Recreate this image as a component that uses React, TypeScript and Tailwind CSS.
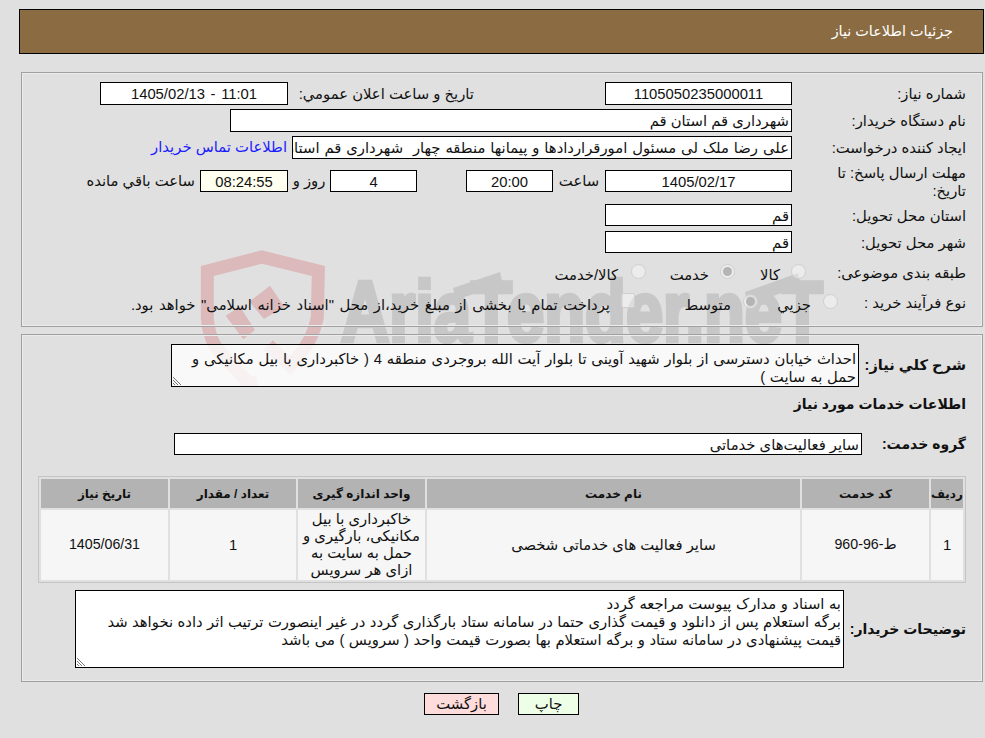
import type { ReactNode } from 'react';

function Box({ w, children, center, bg = 'bg-white', h = 'h-[23px]', extra = '' }: { w: string; children?: ReactNode; center?: boolean; bg?: string; h?: string; extra?: string }) {
  return (
    <div className={`${w} ${h} ${bg} ${extra} shrink-0 overflow-hidden whitespace-nowrap border border-black px-[2px] leading-[22px] ${center ? 'text-center' : 'text-right'}`}>
      {children}
    </div>
  );
}

function Radio({ checked }: { checked?: boolean }) {
  return (
    <span className="relative top-[-1px] inline-flex h-[15px] w-[15px] shrink-0 items-center justify-center rounded-full border border-[#cfcfcf] bg-white/40">
      {checked && <span className="h-[9px] w-[9px] rounded-full bg-[#b4b4b4]" />}
    </span>
  );
}

function Grip() {
  return (
    <svg className="absolute bottom-[1px] left-[1px]" width="10" height="10" viewBox="0 0 10 10" stroke="#777" strokeWidth="1">
      <path d="M0 2 L8 10 M0 5 L5 10 M0 8 L2 10" />
    </svg>
  );
}

function Watermark() {
  return (
    <div className="pointer-events-none absolute left-[190px] top-[245px] h-[142px] w-[640px] overflow-hidden">
      <svg className="absolute left-0 top-0" width="180" height="150" viewBox="0 0 540 450" fill="none">
        <path d="M190 430 L80 310 Q55 270 52 220 L52 78 L215 36 L385 78 L382 215 Q370 290 300 362 L235 300" stroke="#dcbabc" strokeWidth="39" />
        <path d="M130 385 L200 395 L200 440 L165 440 Z M107 212 L150 185 L195 255 L160 283 Z M178 170 L240 122 L283 185 L222 222 Z" fill="#dcbabc" />
      </svg>
      <div
        dir="ltr"
        className="absolute left-[151px] top-[24px] origin-top-left scale-x-[0.88] scale-y-[1.12] whitespace-nowrap font-['Liberation_Sans',sans-serif] text-[76px] font-bold leading-none text-[#c7c7c7] [-webkit-text-stroke:4px_#c7c7c7]"
      >
        AriaTender.neT
      </div>
      <svg className="absolute left-0 top-0" width="640" height="142" viewBox="190 245 640 142" fill="#c7c7c7">
        <path d="M453 288 L500 272 L503 284 L456 300 Z M745 292 L798 273 L801 286 L748 305 Z" />
      </svg>
    </div>
  );
}

function Label({ children, className = 'w-[174px]' }: { children: ReactNode; className?: string }) {
  return <div className={`relative top-[1px] shrink-0 whitespace-nowrap text-right ${className}`}>{children}</div>;
}

export default function App() {
  return (
    <div dir="rtl" className="relative min-h-[738px] w-[985px] overflow-hidden bg-[#e0e0e0] pt-[9px] font-['Liberation_Sans','DejaVu_Sans',sans-serif] text-[14.8px] text-[#111]">
      <Watermark />
      <div className="mr-[1px] flex h-[45px] w-[965px] items-center border border-black bg-[#8b6c42] pr-[30px] text-[14.4px] text-white">
        جزئیات اطلاعات نیاز
      </div>

      <div className="relative mr-[2px] mt-[18px] h-[255px] w-[962px] border border-[#a0a0a0] pr-[16px] pt-[9px] shadow-[inset_0_0_0_1px_#ececec]">
        <div className="flex h-[23px] items-center">
          <Label>شماره نیاز:</Label>
          <Box w="w-[187px]" center>1105050235000011</Box>
          <div className="relative top-[1px] mr-[131px] w-[186px] whitespace-nowrap text-right">تاریخ و ساعت اعلان عمومي:</div>
          <Box w="w-[188px]" center extra="[word-spacing:1.5px]"><span dir="ltr">1405/02/13 - 11:01</span></Box>
        </div>
        <div className="mt-[4px] flex h-[23px] items-center">
          <Label>نام دستگاه خریدار:</Label>
          <Box w="w-[562px]">شهرداری قم استان قم</Box>
        </div>
        <div className="mt-[4px] flex h-[23px] items-center">
          <Label>ایجاد کننده درخواست:</Label>
          <Box w="w-[500px]" extra="[word-spacing:0.8px]">علی رضا ملک لی مسئول امورقراردادها و پیمانها منطقه چهار&nbsp; شهرداری قم استان قم</Box>
          <a className="mr-[5px] whitespace-nowrap text-[#1a1aff]">اطلاعات تماس خریدار</a>
        </div>
        <div className="mt-[11px] flex h-[34px] items-start">
          <Label className="-mt-[7px] w-[174px] leading-[18px]">مهلت ارسال پاسخ: تا<br />تاریخ:</Label>
          <Box w="w-[187px]" h="h-[22px]" center>1405/02/17</Box>
          <div className="w-[52px] text-center leading-[22px]">ساعت</div>
          <Box w="w-[87px]" h="h-[22px]" center>20:00</Box>
          <div className="w-[49px]" />
          <Box w="w-[87px]" h="h-[22px]" center>4</Box>
          <div className="w-[42px] text-center leading-[22px]">روز و</div>
          <Box w="w-[88px]" h="h-[22px]" bg="bg-[#fffff0]" center>08:24:55</Box>
          <div className="mr-[5px] whitespace-nowrap leading-[22px]">ساعت باقي مانده</div>
        </div>
        <div className="flex h-[22px] items-center">
          <Label>استان محل تحویل:</Label>
          <Box w="w-[187px]" h="h-[22px]">قم</Box>
        </div>
        <div className="mt-[5px] flex h-[22px] items-center">
          <Label>شهر محل تحویل:</Label>
          <Box w="w-[187px]" h="h-[22px]">قم</Box>
        </div>
        <div className="mt-[7px] flex h-[24px] items-center">
          <Label className="w-[160px]">طبقه بندی موضوعی:</Label>
          <div className="flex w-[71px] items-center gap-[11px]"><Radio /><span className="relative top-[3px]">کالا</span></div>
          <div className="flex w-[89px] items-center gap-[11px]"><Radio checked /><span className="relative top-[3px]">خدمت</span></div>
          <div className="flex items-center gap-[13px]"><Radio /><span className="relative top-[3px]">کالا/خدمت</span></div>
        </div>
        <div className="mt-[6px] flex h-[24px] items-center">
          <Label className="w-[128px]">نوع فرآیند خرید :</Label>
          <div className="flex w-[80px] items-center gap-[12px]"><Radio /><span className="relative top-[3px]">جزیي</span></div>
          <div className="flex w-[123px] items-center gap-[12px]"><Radio checked /><span className="relative top-[3px]">متوسط</span></div>
          <div className="flex items-center gap-[11px]">
            <span className="relative top-[-2px] h-[15px] w-[14px] shrink-0 rounded-[2px] border border-[#cfcfcf] bg-white/40" />
            <span className="relative top-[3px] whitespace-nowrap [word-spacing:1.5px]">پرداخت تمام یا بخشی از مبلغ خرید،از محل "اسناد خزانه اسلامی" خواهد بود.</span>
          </div>
        </div>
      </div>

      <div className="relative mr-[2px] mt-[7px] h-[348px] w-[962px] border border-[#a0a0a0] pr-[16px] pt-[9px] shadow-[inset_0_0_0_1px_#ececec]">
        <div className="flex h-[43px]">
          <div className="flex w-[107px] shrink-0 items-center whitespace-nowrap text-[14.6px] font-bold">شرح کلي نیاز:</div>
          <div className="relative h-[43px] w-[688px] shrink-0 border border-black bg-white/80 pr-[2px] pt-[5px] leading-[18px] [word-spacing:0.7px]">
            احداث خیابان دسترسی از بلوار شهید آوینی تا بلوار آیت الله بروجردی منطقه 4 ( خاکبرداری با بیل مکانیکی و حمل به سایت )
            <Grip />
          </div>
        </div>
        <div className="mt-[8px] text-[14px] font-bold leading-[18px]">اطلاعات خدمات مورد نیاز</div>
        <div className="mt-[20px] flex h-[22px] items-center">
          <div className="w-[104px] shrink-0 whitespace-nowrap text-[14px] font-bold">گروه خدمت:</div>
          <Box w="w-[688px]" h="h-[22px]">سایر فعالیت‌های خدماتی</Box>
        </div>

        <div className="mt-[21px] w-[928px] border border-[#c4c4c4]">
          <table className="w-full table-fixed border-separate border-spacing-[2px] text-center">
            <thead>
              <tr className="h-[29px] bg-[#b3b3b3] text-[12px]">
                <th className="w-[32px] font-bold">ردیف</th>
                <th className="w-[127px] font-bold">کد خدمت</th>
                <th className="font-bold">نام خدمت</th>
                <th className="w-[127px] font-bold">واحد اندازه گیری</th>
                <th className="w-[126px] font-bold">تعداد / مقدار</th>
                <th className="w-[127px] font-bold">تاریخ نیاز</th>
              </tr>
            </thead>
            <tbody>
              <tr className="h-[70px] bg-[#f6f6f6]">
                <td>1</td>
                <td className="text-[14.2px]">ط-96-960</td>
                <td>سایر فعالیت های خدماتی شخصی</td>
                <td className="px-[4px] leading-[17px]">خاکبرداری با بیل مکانیکی، بارگیری و حمل به سایت به ازای هر سرویس</td>
                <td>1</td>
                <td className="text-[14.2px]">1405/06/31</td>
              </tr>
            </tbody>
          </table>
        </div>

        <div className="mt-[7px] flex">
          <div className="flex w-[122px] shrink-0 items-center whitespace-nowrap text-[14px] font-bold">توضیحات خریدار:</div>
          <div className="relative h-[78px] w-[769px] shrink-0 border border-black bg-white pr-[2px] pt-[4px] leading-[18px] [word-spacing:0.4px]">
            به اسناد و مدارک پیوست مراجعه گردد
            <br />
            برگه استعلام پس از دانلود و قیمت گذاری حتما در سامانه ستاد بارگذاری گردد در غیر اینصورت ترتیب اثر داده نخواهد شد
            <br />
            قیمت پیشنهادی در سامانه ستاد و برگه استعلام بها بصورت قیمت واحد ( سرویس ) می باشد
            <Grip />
          </div>
        </div>
      </div>

      <div dir="ltr" className="mt-[11px] flex justify-center gap-[19px] pl-[18px]">
        <div className="flex h-[22px] w-[75px] items-center justify-center border border-black bg-[#ffdcdc]">بازگشت</div>
        <div className="flex h-[22px] w-[61px] items-center justify-center border border-black bg-[#eeffe8]">چاپ</div>
      </div>
    </div>
  );
}
